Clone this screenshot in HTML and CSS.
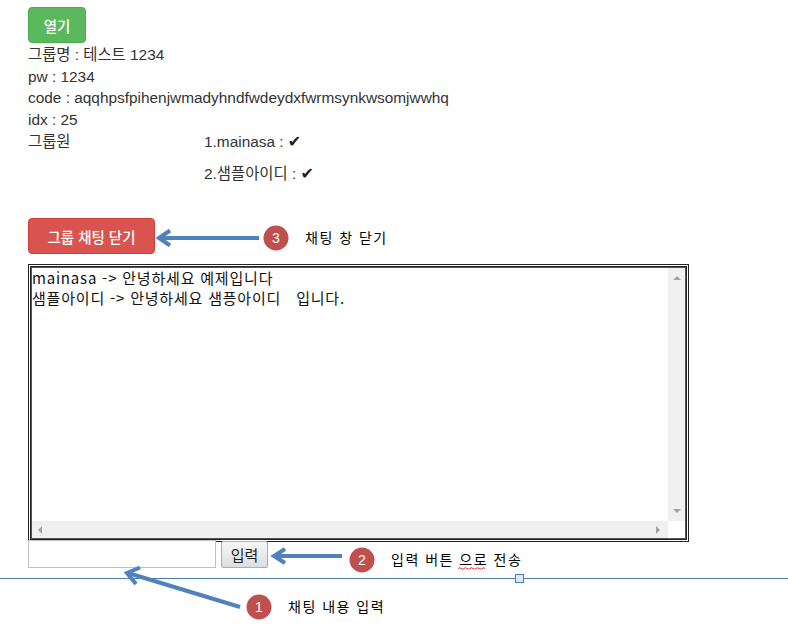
FILE: index.html
```html
<!DOCTYPE html>
<html lang="ko">
<head>
<meta charset="utf-8">
<title>그룹 채팅</title>
<link rel="stylesheet" href="styles.css">
</head>
<body>
<div class="page">
  <button class="btn btn-open">열기</button>
  <div class="info">
    <div>그룹명 : 테스트 1234</div>
    <div>pw : 1234</div>
    <div>code : aqqhpsfpihenjwmadyhndfwdeydxfwrmsynkwsomjwwhq</div>
    <div>idx : 25</div>
  </div>
  <div class="members">
    <div class="members-label">그룹원</div>
    <div class="members-list">
      <div class="member">1.mainasa : <span class="check">✔</span></div>
      <div class="member">2.샘플아이디 : <span class="check">✔</span></div>
    </div>
  </div>
  <button class="btn btn-close">그룹 채팅 닫기</button>
  <div class="chat-box">
    <div class="chat-inner">
      <div class="chat-text">
        <div class="chat-line">mainasa -&gt; 안녕하세요 예제입니다</div>
        <div class="chat-line">샘플아이디 -&gt; 안녕하세요 샘픙아이디   입니다.</div>
      </div>
      <div class="vscroll"><span class="tri tri-up"></span><span class="tri tri-down"></span></div>
      <div class="hscroll"><span class="tri tri-left"></span><span class="tri tri-right"></span></div>
      <div class="corner"></div>
    </div>
  </div>
  <div class="input-row">
    <input class="chat-input" type="text">
    <button class="btn-send">입력</button>
  </div>
</div>

<div class="divider"><span class="handle"></span></div>

<svg class="annot" width="788" height="642" viewBox="0 0 788 642">
  <g stroke="#4f81bd" stroke-width="4" fill="none" stroke-linecap="butt" stroke-linejoin="miter">
    <line x1="259" y1="238" x2="160" y2="238"/>
    <polyline points="170,230.5 159,238 170,245.5"/>
    <line x1="342" y1="556" x2="276" y2="556"/>
    <polyline points="285,549 274,556 285,563"/>
    <line x1="240" y1="607" x2="128" y2="573"/>
    <polyline points="140,567.5 127,573 136,584"/>
  </g>
  <g fill="#c0504d">
    <circle cx="276" cy="238" r="12.5"/>
    <circle cx="362" cy="560" r="12.5"/>
    <circle cx="259" cy="607" r="12.5"/>
  </g>
  <g class="num" fill="#ffffff" text-anchor="middle">
    <text x="276" y="243">3</text>
    <text x="362" y="565">2</text>
    <text x="259" y="612">1</text>
  </g>
  <g class="label" fill="#000000">
    <text x="305" y="243">채팅 창 닫기</text>
    <text x="391" y="565">입력 버튼 으로 전송</text>
    <text x="288" y="612">채팅 내용 입력</text>
  </g>
  <path d="M458 568.5 q1.5 -1.5 3 0 t3 0 t3 0 t3 0 t3 0 t3 0 t3 0 t3 0 t3 0" stroke="#e03030" stroke-width="1" fill="none"/>
</svg>
</body>
</html>
```
FILE: styles.css
```css
html, body {
  margin: 0;
  padding: 0;
  background: #ffffff;
}

body {
  width: 788px;
  height: 642px;
  position: relative;
  overflow: hidden;
  font-family: "Liberation Sans", "Noto Sans CJK KR", sans-serif;
  font-size: 15.4px;
  color: #333333;
}

.page {
  padding: 7px 0 0 28px;
}

.btn {
  display: block;
  border: 1px solid transparent;
  border-radius: 4px;
  color: #ffffff;
  font-family: "Liberation Sans", "Noto Sans CJK KR", sans-serif;
  font-size: 14.5px;
  font-weight: 500;
  height: 36px;
  padding: 0 12px;
  margin: 0;
  cursor: pointer;
}

.btn-open {
  width: 58px;
  background: #5cb85c;
  border-color: #4cae4c;
}

.info {
  padding-top: 1px;
  line-height: 21.7px;
}

.members {
  display: grid;
  grid-template-columns: 176px auto;
  line-height: 21.7px;
}

.members-list {
  display: flex;
  flex-direction: column;
  gap: 10px;
}

.check {
  font-family: "DejaVu Sans", sans-serif;
  color: #222;
  font-size: 16px;
}

.btn-close {
  margin-top: 34px;
  width: 127px;
  background: #d9534f;
  border-color: #d43f3a;
}

.chat-box {
  margin-top: 10px;
  width: 655px;
  height: 272px;
  border: 3px double #222222;
}

.chat-inner {
  height: 100%;
  border: 1px solid #555555;
  box-sizing: border-box;
  display: grid;
  grid-template-columns: 1fr 17px;
  grid-template-rows: 1fr 17px;
  background: #ffffff;
}

.chat-text {
  font-family: "Noto Sans CJK KR", sans-serif;
  font-size: 15px;
  letter-spacing: 0.8px;
  line-height: 20px;
  color: #111111;
}

.chat-line {
  white-space: pre;
  height: 20px;
}

.vscroll, .hscroll {
  background: #f0f0f0;
  position: relative;
}

.corner {
  background: #ffffff;
}

.tri {
  position: absolute;
  width: 0;
  height: 0;
}

.tri-up {
  top: 8px;
  left: 5px;
  border-left: 4px solid transparent;
  border-right: 4px solid transparent;
  border-bottom: 4px solid #a3a3a3;
}

.tri-down {
  bottom: 8px;
  left: 5px;
  border-left: 4px solid transparent;
  border-right: 4px solid transparent;
  border-top: 4px solid #a3a3a3;
}

.tri-left {
  left: 6px;
  top: 5px;
  border-top: 4px solid transparent;
  border-bottom: 4px solid transparent;
  border-right: 4px solid #a3a3a3;
}

.tri-right {
  right: 8px;
  top: 5px;
  border-top: 4px solid transparent;
  border-bottom: 4px solid transparent;
  border-left: 4px solid #a3a3a3;
}

.input-row {
  display: flex;
  align-items: flex-start;
  gap: 5px;
  margin-top: -2px;
}

.chat-input {
  width: 188px;
  height: 28px;
  box-sizing: border-box;
  border: 1px solid #c0c0c0;
  margin: 0;
  padding: 0 3px;
}

.btn-send {
  width: 47px;
  height: 27px;
  margin-top: 1px;
  box-sizing: border-box;
  border: 1px solid #adadad;
  border-radius: 2px;
  background: linear-gradient(#f6f6f6, #dedede);
  font-family: "Noto Sans CJK KR", sans-serif;
  font-size: 15px;
  color: #222;
  padding: 0;
}

.divider {
  position: absolute;
  left: 0;
  top: 578px;
  width: 788px;
  height: 1px;
  background: #4a7ebb;
}

.handle {
  position: absolute;
  left: 515px;
  top: -4px;
  width: 7px;
  height: 7px;
  border: 1px solid #4a7ebb;
  background: #dbe8f5;
}

.annot {
  position: absolute;
  left: 0;
  top: 0;
  pointer-events: none;
}

.num text {
  font-family: "Liberation Sans", sans-serif;
  font-size: 14px;
}

.label text {
  font-family: "Noto Sans CJK KR", sans-serif;
  font-size: 14px;
  letter-spacing: 1.5px;
}
```
